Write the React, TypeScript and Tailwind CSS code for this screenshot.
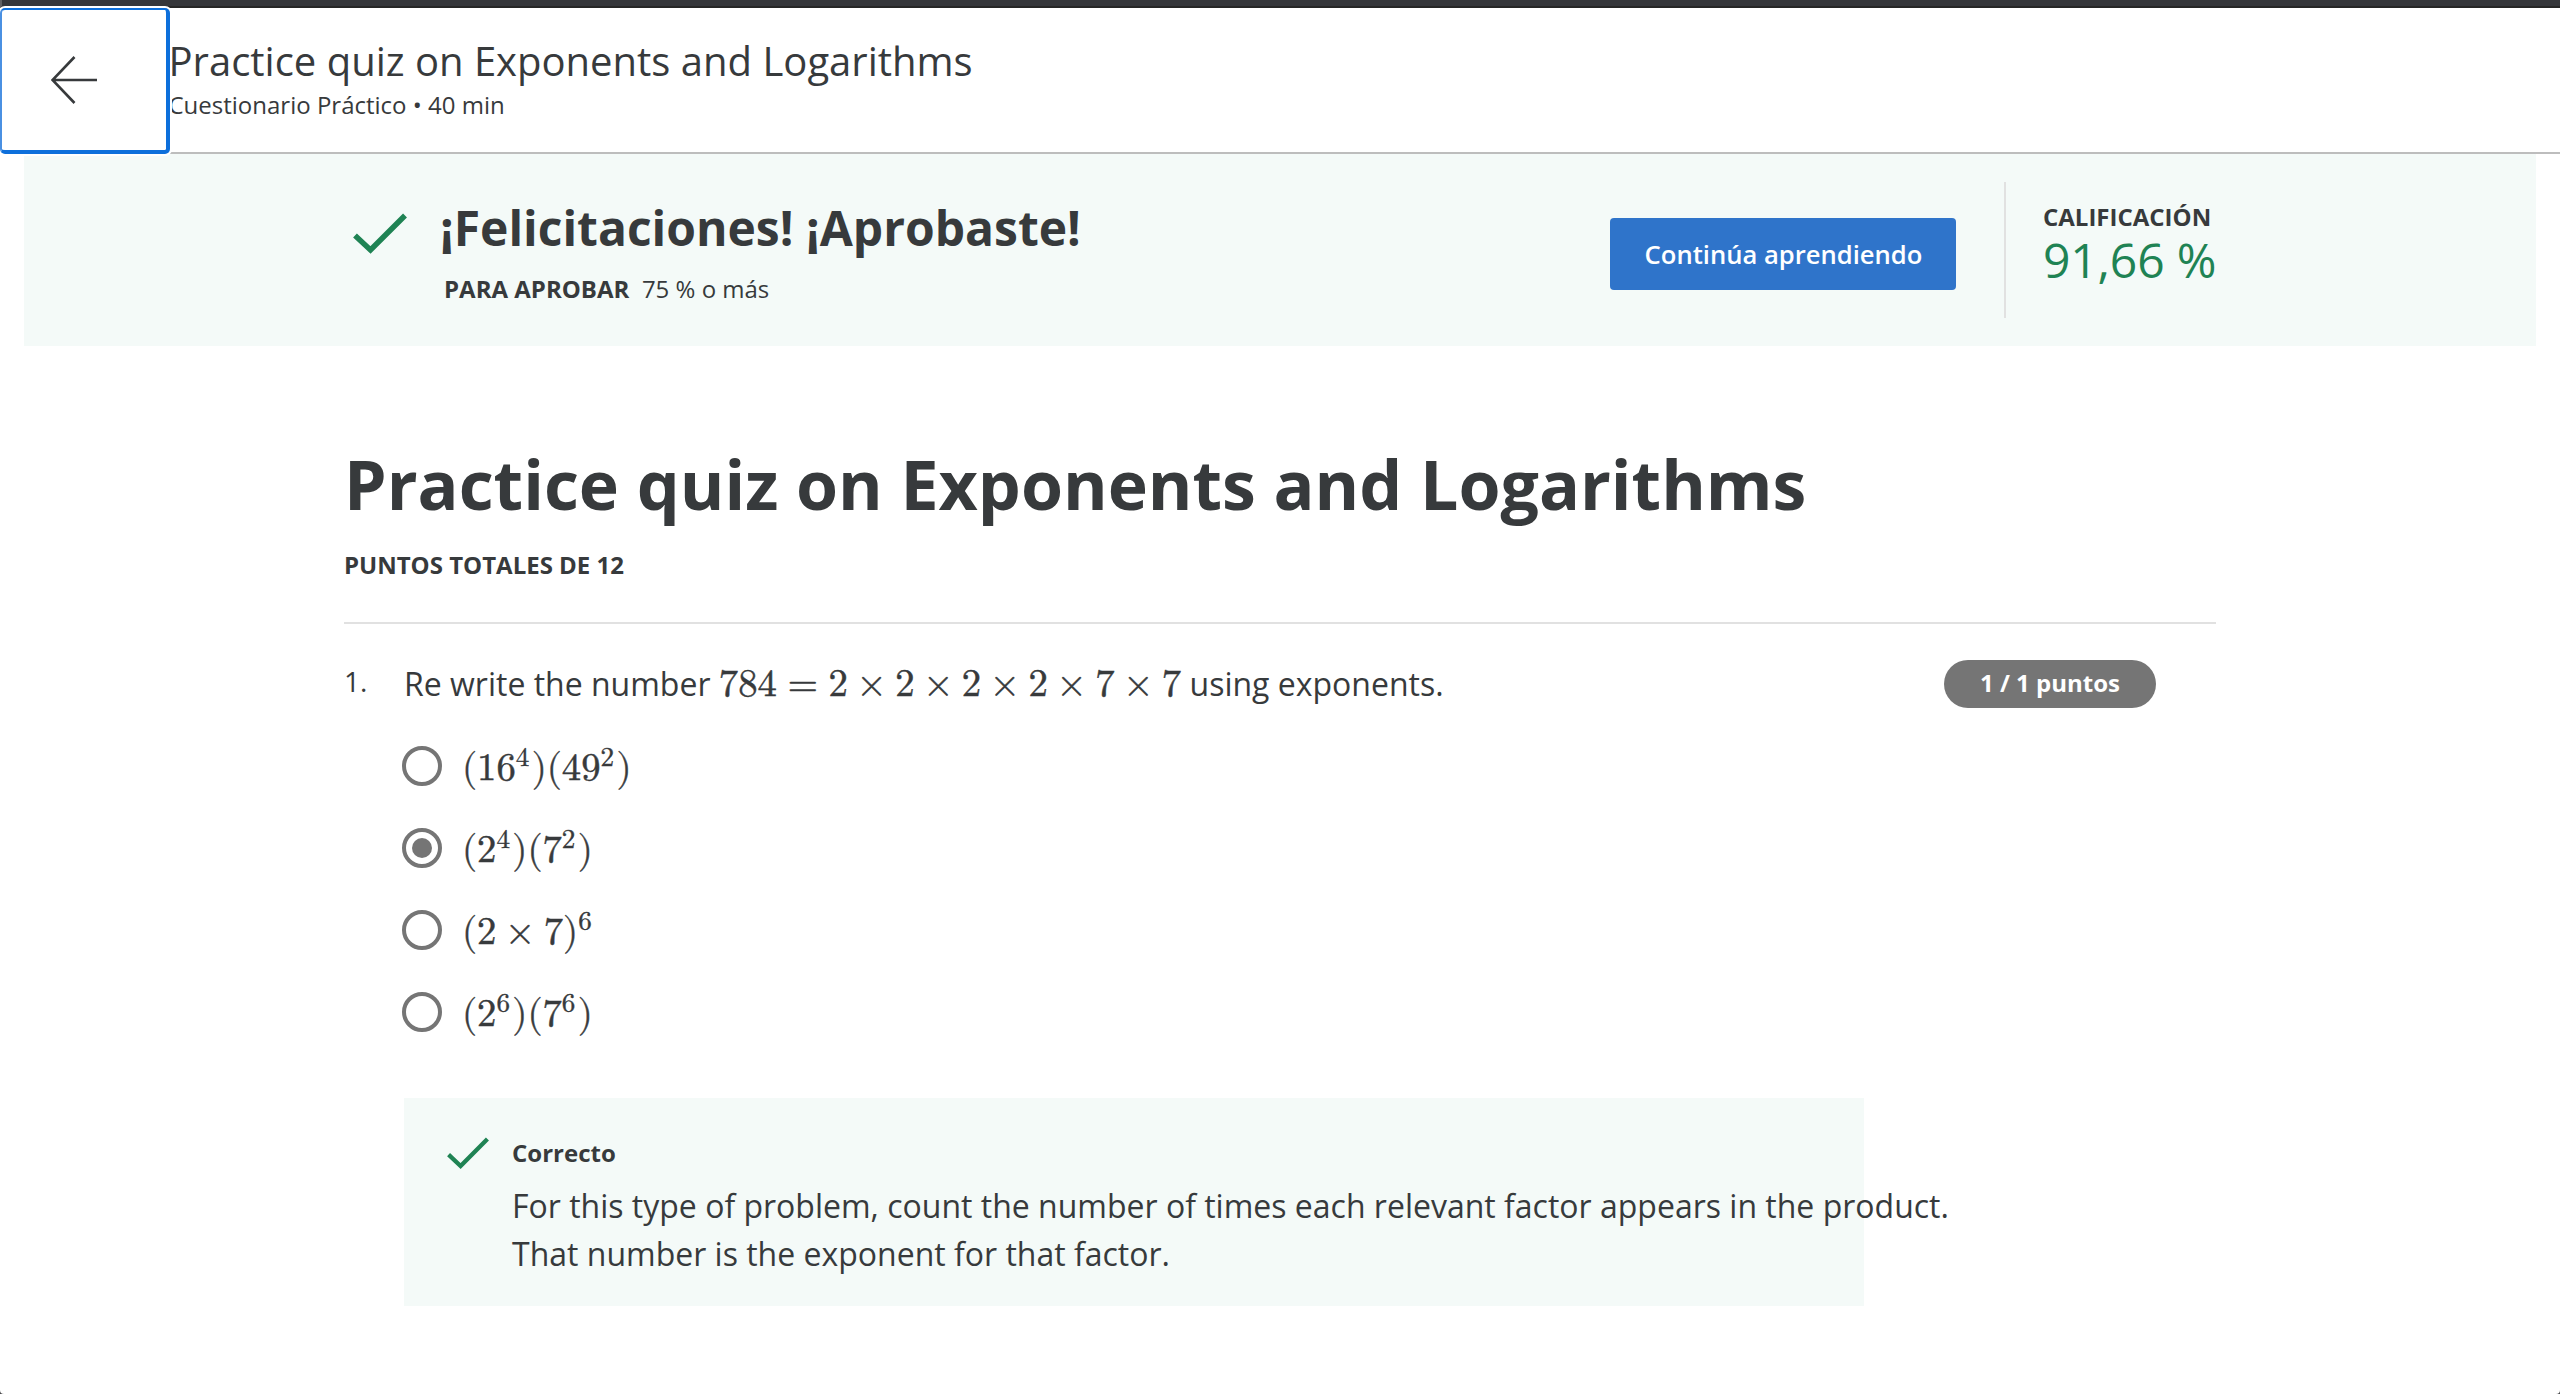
import type { ReactNode } from "react";

function Num({ children }: { children: ReactNode }) {
  return (
    <span className="font-['Latin_Modern_Math',math,'Liberation_Serif',serif] text-[38.72px] leading-[0] [-webkit-text-stroke:0.5px_#373a3c]">
      {children}
    </span>
  );
}

function Sup({ children }: { children: ReactNode }) {
  return (
    <span className="mr-[2.4px] align-[14px] font-['Latin_Modern_Math',math,'Liberation_Serif',serif] text-[27.1px] leading-[0] [-webkit-text-stroke:0.4px_#373a3c]">
      {children}
    </span>
  );
}

function Rel() {
  return (
    <span className="mx-[10.76px]">
      <Num>=</Num>
    </span>
  );
}

function Times() {
  return (
    <span className="mx-[8.6px]">
      <Num>×</Num>
    </span>
  );
}

function Check({ className }: { className: string }) {
  return (
    <svg viewBox="0 0 54 42" className={className} fill="none" stroke="#1f8354" strokeWidth="5.5">
      <path d="M2 22.5 L17.5 37 L52 2.5" />
    </svg>
  );
}

function Option({ selected, children }: { selected?: boolean; children: ReactNode }) {
  return (
    <div className="flex h-[82px] items-center">
      <span className="flex size-10 shrink-0 items-center justify-center rounded-full border-4 border-[#757575]">
        {selected && <span className="size-5 rounded-full bg-[#757575]" />}
      </span>
      <span className="ml-5 pt-[3px] text-[32px] leading-[48px] whitespace-nowrap">{children}</span>
    </div>
  );
}

export default function App() {
  return (
    <div className="h-[1394px] w-[2560px] overflow-hidden bg-[#4a4a4c]">
      <div className="h-full overflow-hidden rounded-b-[4px] bg-white font-['Open_Sans',sans-serif] text-[#373a3c]">
        <div className="h-2 border-b-2 border-l-2 border-b-[#262626] border-l-[#5f6063] bg-[#35363a]" />

        <header className="flex h-[146px] border-b-2 border-[#bdbdbd]">
          <button className="z-10 flex h-[146px] w-[170px] shrink-0 items-center rounded-[5px] border-2 border-r-4 border-b-4 border-[#0d6fdb] border-l-[#4a90e2] bg-white pl-[49px] shadow-[0_0_0_2px_#ffffff]">
            <svg viewBox="0 0 46 48" className="h-12 w-[46px]" fill="none" stroke="#373a3c" strokeWidth="2.6">
              <path d="M1.5 24 H46 M23.5 1 L1.5 24 L23.5 47" />
            </svg>
          </button>
          <div className="-ml-[1.5px] pt-[26px]">
            <div className="text-[40px] leading-[54px]">Practice quiz on Exponents and Logarithms</div>
            <div className="text-[24px] leading-[34px]">Cuestionario Práctico • 40 min</div>
          </div>
        </header>

        <section className="mx-6 flex h-48 bg-[#f4faf8] py-7 pr-80 pl-[329px]">
          <Check className="mt-[30.5px] h-[42px] w-[54px]" />
          <div className="ml-[33px] pt-[14px]">
            <h2 className="text-[48px] leading-[64px] font-bold">¡Felicitaciones! ¡Aprobaste!</h2>
            <div className="mt-[11px] ml-1 flex gap-[12.5px] text-[24px] leading-[36px]">
              <span className="font-bold">PARA APROBAR</span>
              <span>75 % o más</span>
            </div>
          </div>
          <div className="ml-auto flex">
            <button className="mt-9 mr-12 h-[72px] w-[346px] rounded-[4px] bg-[#2f74ca] pl-px text-[25.6px] leading-[74px] font-semibold text-white">
              Continúa aprendiendo
            </button>
            <div className="w-[212px] border-l-2 border-[#e1e1e1] pt-[21px] pl-[37px] whitespace-nowrap">
              <div className="text-[24px] leading-[28px] font-bold">CALIFICACIÓN</div>
              <div className="text-[48px] leading-[58px] tracking-[-0.15px] text-[#1f8354]">91,66 %</div>
            </div>
          </div>
        </section>

        <main className="mx-[344px] pt-[94px]">
          <h1 className="text-[68px] leading-[88px] font-bold">Practice quiz on Exponents and Logarithms</h1>
          <div className="mt-[19px] text-[24px] leading-[36px] font-bold">PUNTOS TOTALES DE 12</div>
          <div className="mt-[39px] h-[2px] bg-[#e1e1e1]" />

          <div className="mt-9 flex items-start">
            <div className="w-[60px] pt-px text-[28px] leading-[40px]">1.</div>
            <div className="text-[32px] leading-[48px] whitespace-nowrap">
              Re write the number <Num>784</Num>
              <Rel />
              <Num>2</Num>
              <Times />
              <Num>2</Num>
              <Times />
              <Num>2</Num>
              <Times />
              <Num>2</Num>
              <Times />
              <Num>7</Num>
              <Times />
              <Num>7</Num> using exponents.
            </div>
            <div className="mr-[60px] ml-auto h-12 w-[212px] rounded-full bg-[#757575] text-center text-[24px] leading-[46px] font-bold text-white">
              1 / 1 puntos
            </div>
          </div>

          <div className="mt-[17px] ml-[58px]">
            <Option>
              <Num>(16</Num>
              <Sup>4</Sup>
              <Num>)(49</Num>
              <Sup>2</Sup>
              <Num>)</Num>
            </Option>
            <Option selected>
              <Num>(2</Num>
              <Sup>4</Sup>
              <Num>)(7</Num>
              <Sup>2</Sup>
              <Num>)</Num>
            </Option>
            <Option>
              <Num>(2</Num>
              <Times />
              <Num>7)</Num>
              <Sup>6</Sup>
            </Option>
            <Option>
              <Num>(2</Num>
              <Sup>6</Sup>
              <Num>)(7</Num>
              <Sup>6</Sup>
              <Num>)</Num>
            </Option>
          </div>

          <div className="mt-[45px] ml-[60px] flex h-[208px] w-[1460px] bg-[#f4faf8] pt-9 pl-[43px]">
            <Check className="mt-[3px] h-[33px] w-[42px] shrink-0" />
            <div className="ml-[23px] whitespace-nowrap">
              <div className="text-[24px] leading-[38px] font-bold">Correcto</div>
              <p className="mt-[10px] text-[32px] leading-[48px]">
                For this type of problem, count the number of times each relevant factor appears in the product.
                <br />
                That number is the exponent for that factor.
              </p>
            </div>
          </div>
        </main>
      </div>
    </div>
  );
}
